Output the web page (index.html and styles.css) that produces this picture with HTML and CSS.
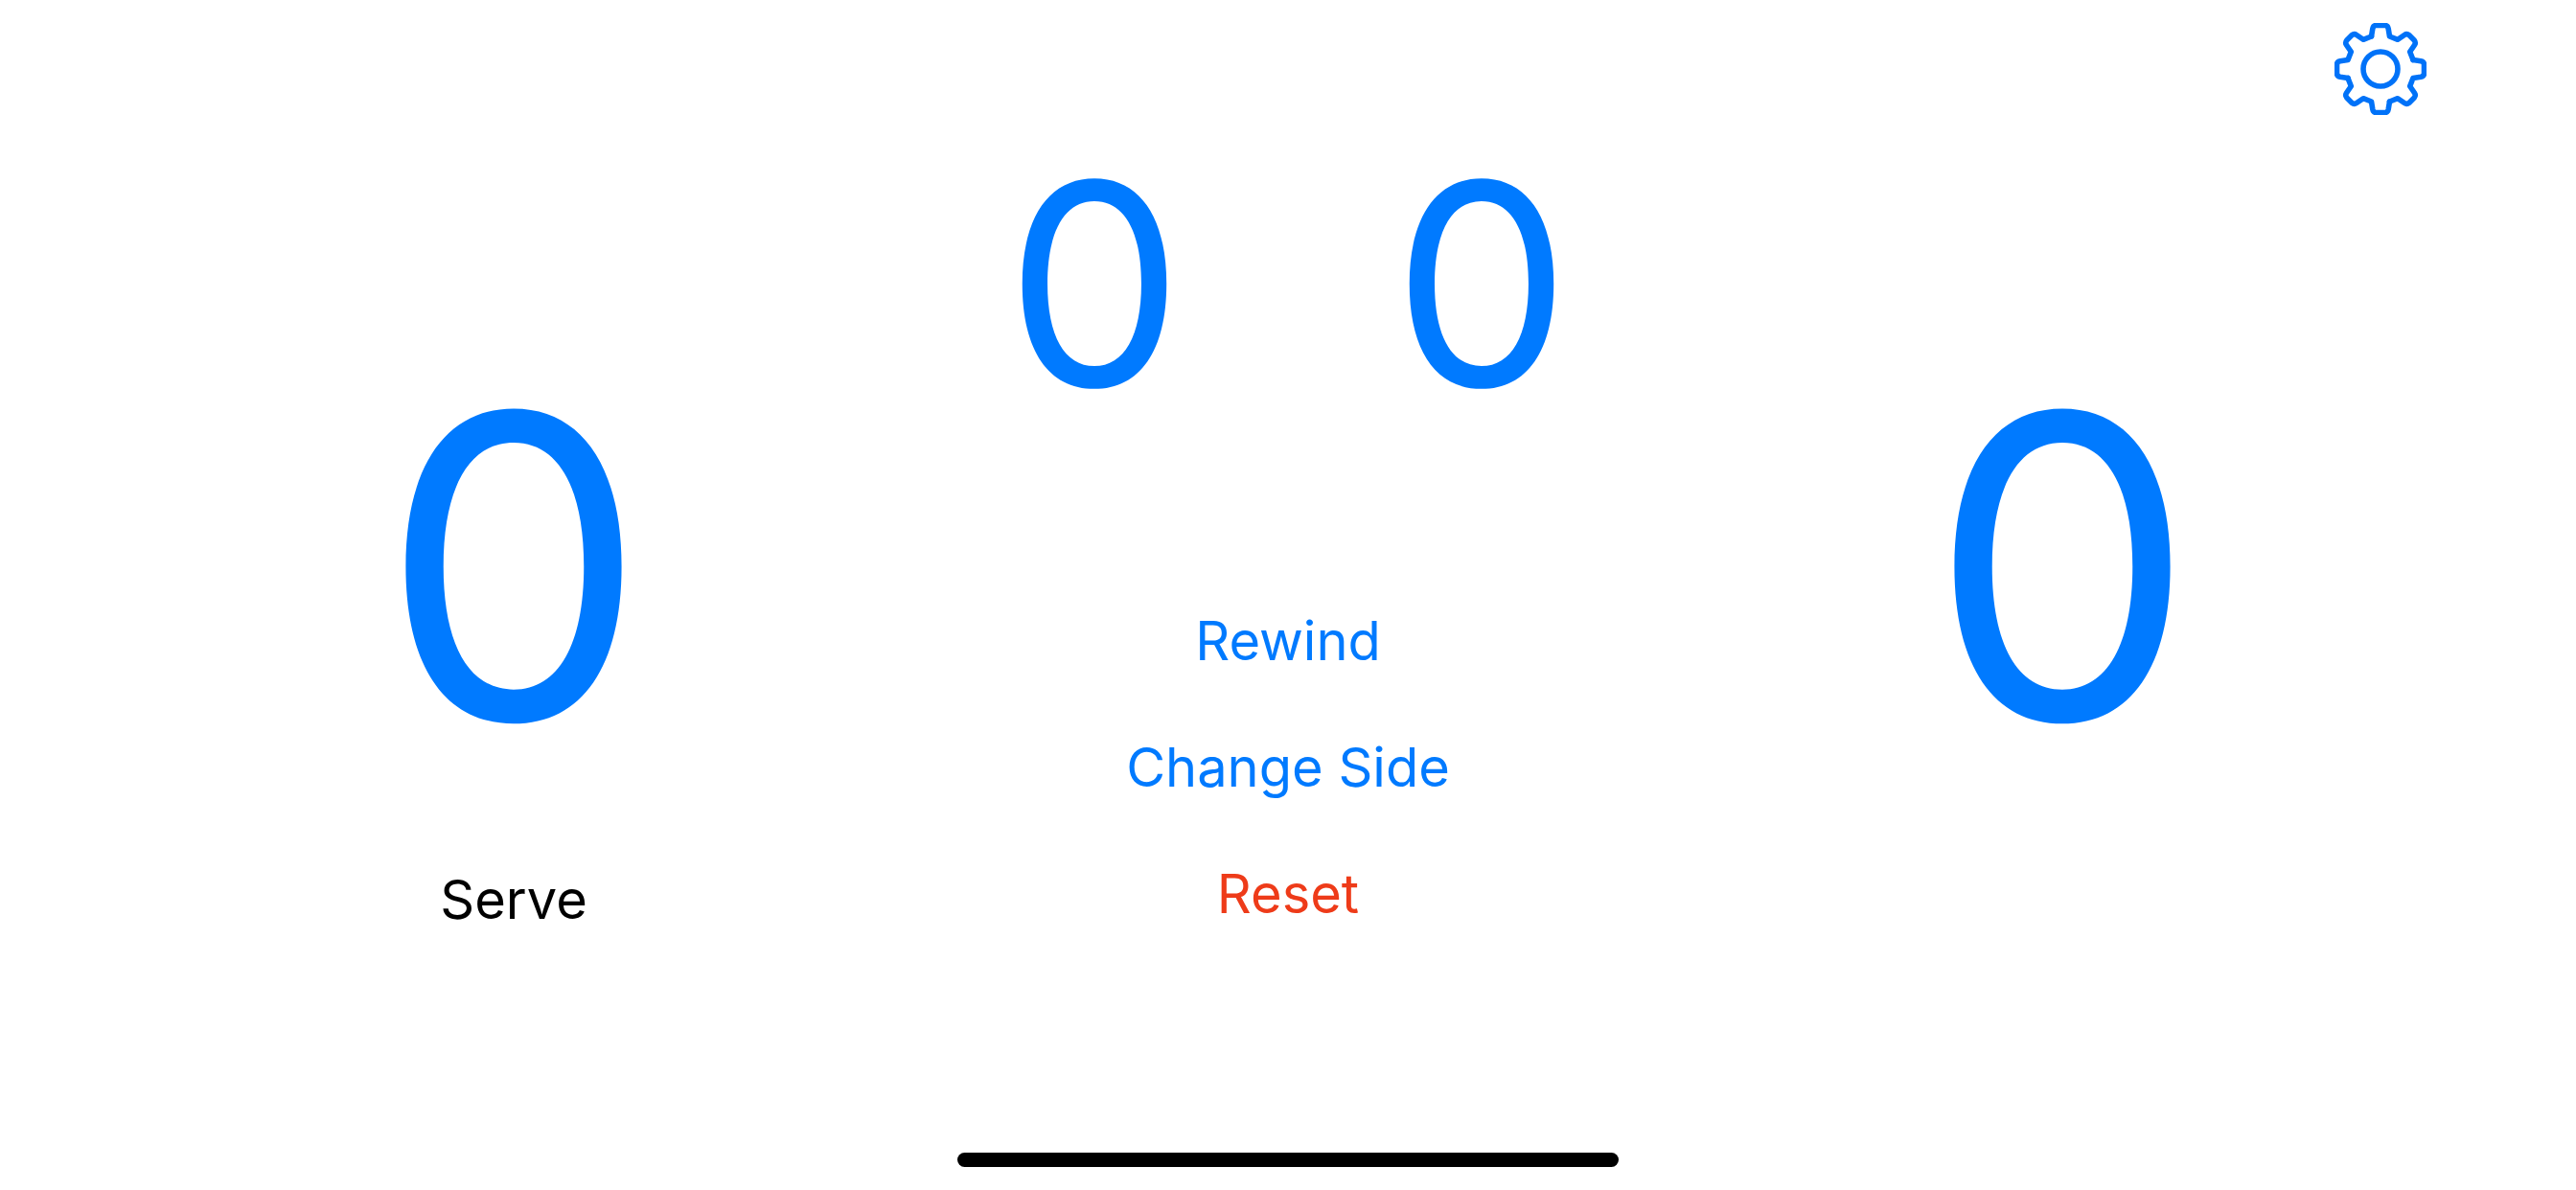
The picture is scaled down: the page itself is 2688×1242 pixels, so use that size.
FILE: index.html
```html
<!DOCTYPE html>
<html lang="en">
<head>
<meta charset="utf-8">
<meta name="viewport" content="width=device-width, initial-scale=1">
<title>Scoreboard</title>
<link rel="stylesheet" href="styles.css">
</head>
<body>
<header class="toolbar">
  <button class="settings" type="button" aria-label="Settings">
    <svg class="settings-icon" viewBox="-48 -48 96 96" aria-hidden="true">
      <defs>
        <path id="teeth" d="M-9.500-34L-8.200-42Q-7.500-45.500-4.500-45.500L4.500-45.500Q7.500-45.500 8.200-42L9.500-34L18-30.700L25-35.500Q27.500-37.200 30-35.200L35.200-30Q37.200-27.500 35.500-25L30.700-18L34-9.500"/>
      </defs>
      <use href="#teeth"/>
      <use href="#teeth" transform="rotate(90)"/>
      <use href="#teeth" transform="rotate(180)"/>
      <use href="#teeth" transform="rotate(270)"/>
      <circle r="18"/>
    </svg>
  </button>
</header>
<main class="board">
  <section class="side">
    <button class="points" type="button" aria-label="Left points: 0">0</button>
    <p class="serve">Serve</p>
  </section>
  <section class="center">
    <div class="sets">
      <button class="set" type="button" aria-label="Left sets: 0">0</button>
      <button class="set" type="button" aria-label="Right sets: 0">0</button>
    </div>
    <div class="actions">
      <button class="action" type="button">Rewind</button>
      <button class="action" type="button">Change Side</button>
      <button class="action action-danger" type="button">Reset</button>
    </div>
  </section>
  <section class="side">
    <button class="points" type="button" aria-label="Right points: 0">0</button>
  </section>
</main>
<footer class="home">
  <div class="home-indicator"></div>
</footer>
</body>
</html>
```
FILE: styles.css
```css
* {
  box-sizing: border-box;
}

body {
  display: flex;
  flex-direction: column;
  min-height: 100vh;
  margin: 0;
  background: #fff;
  color: #000;
  font-family: Inter, "Liberation Sans", sans-serif;
  font-size: 56px;
  line-height: 72px;
}

button {
  padding: 0;
  border: 0;
  background: none;
  color: #007aff;
  font: inherit;
  cursor: pointer;
}

.toolbar {
  display: flex;
  justify-content: flex-end;
  padding: 24px 156px 0;
}

.settings {
  display: flex;
}

.settings-icon {
  width: 96px;
  height: 96px;
  fill: none;
  stroke: #0072f8;
  stroke-width: 5.6;
  stroke-linecap: round;
  stroke-linejoin: round;
}

.board {
  display: grid;
  flex: 1;
  grid-template-columns: repeat(3, 1fr);
  padding: 0 132px;
}

.side {
  display: flex;
  flex-direction: column;
  align-items: center;
  gap: 93px;
  padding-top: 252px;
}

.points {
  font-size: 440px;
  line-height: 438px;
}

.serve {
  margin: 0;
}

.center {
  display: flex;
  flex-direction: column;
  gap: 191px;
  padding-top: 30px;
}

.sets {
  display: grid;
  grid-template-columns: repeat(2, 1fr);
}

.set {
  font-size: 294px;
  line-height: 292px;
}

.actions {
  display: flex;
  flex-direction: column;
  align-items: center;
  gap: 60px;
}

.action-danger {
  color: #ee3b19;
}

.home {
  display: flex;
  justify-content: center;
  padding-bottom: 24px;
}

.home-indicator {
  width: 690px;
  height: 15px;
  border-radius: 8px;
  background: #000;
}
```
